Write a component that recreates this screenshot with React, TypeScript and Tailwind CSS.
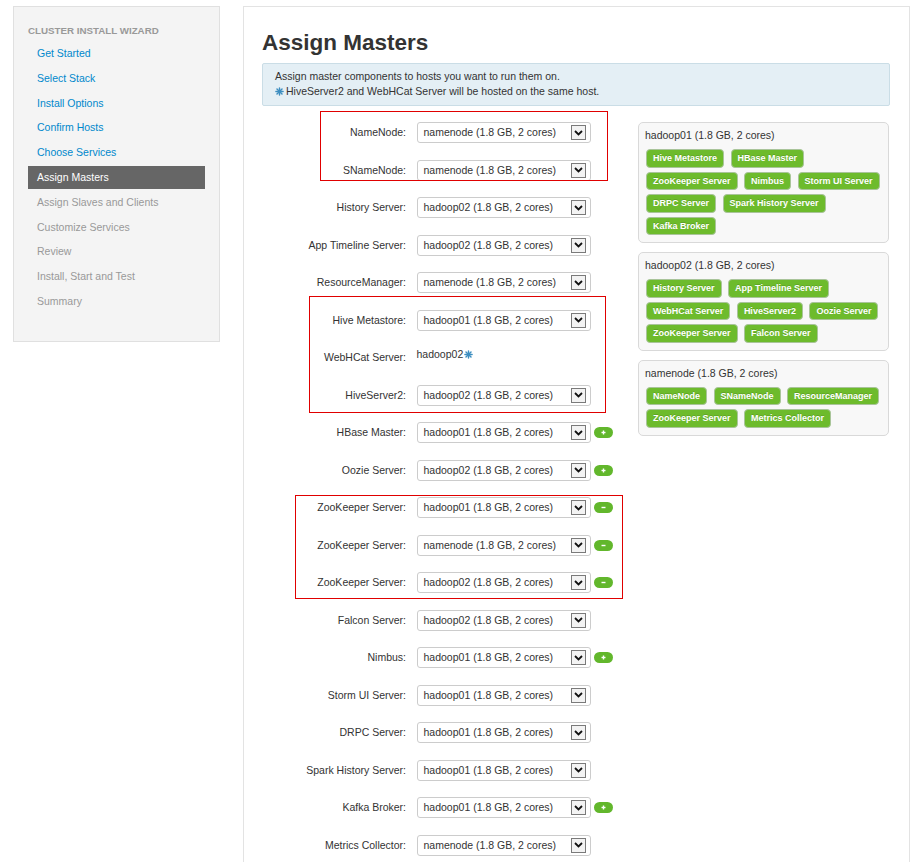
import React from "react";

const navItems: { label: string; state: "link" | "active" | "disabled" }[] = [
  { label: "Get Started", state: "link" },
  { label: "Select Stack", state: "link" },
  { label: "Install Options", state: "link" },
  { label: "Confirm Hosts", state: "link" },
  { label: "Choose Services", state: "link" },
  { label: "Assign Masters", state: "active" },
  { label: "Assign Slaves and Clients", state: "disabled" },
  { label: "Customize Services", state: "disabled" },
  { label: "Review", state: "disabled" },
  { label: "Install, Start and Test", state: "disabled" },
  { label: "Summary", state: "disabled" },
];

type Row = { label: string; host?: string; btn?: "+" | "-"; fixed?: string };
const H1 = "hadoop01 (1.8 GB, 2 cores)";
const H2 = "hadoop02 (1.8 GB, 2 cores)";
const NN = "namenode (1.8 GB, 2 cores)";

const rows: Row[] = [
  { label: "NameNode:", host: NN },
  { label: "SNameNode:", host: NN },
  { label: "History Server:", host: H2 },
  { label: "App Timeline Server:", host: H2 },
  { label: "ResourceManager:", host: NN },
  { label: "Hive Metastore:", host: H1 },
  { label: "WebHCat Server:", fixed: "hadoop02" },
  { label: "HiveServer2:", host: H2 },
  { label: "HBase Master:", host: H1, btn: "+" },
  { label: "Oozie Server:", host: H2, btn: "+" },
  { label: "ZooKeeper Server:", host: H1, btn: "-" },
  { label: "ZooKeeper Server:", host: NN, btn: "-" },
  { label: "ZooKeeper Server:", host: H2, btn: "-" },
  { label: "Falcon Server:", host: H2 },
  { label: "Nimbus:", host: H1, btn: "+" },
  { label: "Storm UI Server:", host: H1 },
  { label: "DRPC Server:", host: H1 },
  { label: "Spark History Server:", host: H1 },
  { label: "Kafka Broker:", host: H1, btn: "+" },
  { label: "Metrics Collector:", host: NN },
];

const hosts = [
  {
    title: "hadoop01 (1.8 GB, 2 cores)",
    comps: [
      "Hive Metastore",
      "HBase Master",
      "ZooKeeper Server",
      "Nimbus",
      "Storm UI Server",
      "DRPC Server",
      "Spark History Server",
      "Kafka Broker",
    ],
  },
  {
    title: "hadoop02 (1.8 GB, 2 cores)",
    comps: [
      "History Server",
      "App Timeline Server",
      "WebHCat Server",
      "HiveServer2",
      "Oozie Server",
      "ZooKeeper Server",
      "Falcon Server",
    ],
  },
  {
    title: "namenode (1.8 GB, 2 cores)",
    comps: ["NameNode", "SNameNode", "ResourceManager", "ZooKeeper Server", "Metrics Collector"],
  },
];

function Asterisk({ className = "" }: { className?: string }) {
  return (
    <svg width="9" height="9" viewBox="0 0 10 10" className={className}>
      <g stroke="#3d8ec0" strokeWidth="1.6" strokeLinecap="round">
        <line x1="5" y1="1" x2="5" y2="9" />
        <line x1="1" y1="5" x2="9" y2="5" />
        <line x1="2.2" y1="2.2" x2="7.8" y2="7.8" />
        <line x1="7.8" y1="2.2" x2="2.2" y2="7.8" />
      </g>
    </svg>
  );
}

function Select({ value }: { value: string }) {
  return (
    <div className="w-[174px] h-[21px] border border-[#cccccc] rounded-[3px] bg-white flex items-center justify-between pl-[6px] pr-[4px]">
      <span className="text-[10.5px] leading-none text-[#333]">{value}</span>
      <span className="w-[15px] h-[15px] border border-[#7a7a7a] bg-[#f3f3f3] flex items-center justify-center">
        <svg width="9" height="6" viewBox="0 0 9 6">
          <path d="M1 1 L4.5 4.5 L8 1" fill="none" stroke="#111" strokeWidth="1.8" />
        </svg>
      </span>
    </div>
  );
}

function Pill({ kind }: { kind: "+" | "-" }) {
  return (
    <span className="ml-[3px] w-[19px] h-[11px] rounded-full bg-[#62b72c] flex items-center justify-center">
      <svg width="7" height="7" viewBox="0 0 7 7">
        <line x1="1.5" y1="3.5" x2="5.5" y2="3.5" stroke="#fff" strokeWidth="1.4" />
        {kind === "+" && <line x1="3.5" y1="1.5" x2="3.5" y2="5.5" stroke="#fff" strokeWidth="1.4" />}
      </svg>
    </span>
  );
}

export default function App() {
  return (
    <div
      className="relative w-[911px] h-[862px] overflow-hidden bg-white text-[#333]"
      style={{ fontFamily: '"Liberation Sans", Arial, sans-serif' }}
    >
      <div className="flex items-start pt-[6px] pl-[13px]">
        {/* Sidebar */}
        <div className="w-[207px] h-[336px] border border-[#e0e0e0] bg-[#f4f4f4] px-[14px] pt-[15.5px]">
          <div className="text-[9.75px] leading-[15px] font-bold text-[#999]">CLUSTER INSTALL WIZARD</div>
          <div className="mt-[5px] flex flex-col gap-[2px]">
            {navItems.map((n) => (
              <div
                key={n.label}
                className={
                  "h-[22.8px] pl-[9px] flex items-center text-[10.5px] " +
                  (n.state === "active"
                    ? "bg-[#666666] text-white"
                    : n.state === "link"
                    ? "text-[#0088cc]"
                    : "text-[#999999]")
                }
              >
                {n.label}
              </div>
            ))}
          </div>
        </div>

        {/* Main panel */}
        <div className="ml-[23px] w-[667px] h-[900px] border-l border-t border-r border-[#e3e3e3] pl-[18px] pr-[19px] pt-[22.6px]">
          <h1 className="text-[22.5px] leading-[25px] font-bold text-[#333]">Assign Masters</h1>
          <div className="mt-[8.4px] h-[43px] border border-[#cadde6] bg-[#e4eff5] rounded-[2px] px-[12px] py-[5.5px] text-[10.5px] leading-[15px] text-[#333]">
            <div>Assign master components to hosts you want to run them on.</div>
            <div className="flex items-center">
              <Asterisk className="mr-[2px]" />
              <span>HiveServer2 and WebHCat Server will be hosted on the same host.</span>
            </div>
          </div>

          <div className="mt-[8px] flex">
            <div className="w-[376px] flex flex-col">
              {rows.map((r, i) => (
                <div key={i} className="h-[37.5px] flex items-center">
                  <div className="w-[144px] text-right text-[10.5px] leading-none">{r.label}</div>
                  <div className="ml-[10.5px] flex items-center">
                    {r.fixed ? (
                      <span className="mb-[7px] flex items-center text-[10.5px] leading-none">
                        {r.fixed}
                        <Asterisk className="ml-[1px]" />
                      </span>
                    ) : (
                      <Select value={r.host!} />
                    )}
                    {r.btn && <Pill kind={r.btn} />}
                  </div>
                </div>
              ))}
            </div>

            <div className="flex flex-col gap-[9px] mt-[8.3px]">
              {hosts.map((h) => (
                <div
                  key={h.title}
                  className="w-[251px] border border-[#d9d9d9] rounded-[5px] bg-[#f8f8f8] px-[7px] pt-[5px] pb-[7px]"
                >
                  <div className="text-[10.5px] leading-[15px] -ml-[1px]">{h.title}</div>
                  <div className="mt-[6px] flex flex-wrap gap-x-[6.5px] gap-y-[4px]">
                    {h.comps.map((c, j) => (
                      <span
                        key={j}
                        className="h-[18.5px] px-[6px] rounded-[4px] bg-[#6dbb2c] border border-[#a9c49a] text-white text-[9px] font-bold flex items-center leading-none"
                        style={{ textShadow: "0 -1px 0 rgba(0,0,0,0.15)" }}
                      >
                        {c}
                      </span>
                    ))}
                  </div>
                </div>
              ))}
            </div>
          </div>
        </div>
      </div>

      {/* red annotation boxes */}
      <div className="absolute left-[320px] top-[110.5px] w-[287.5px] h-[70px] border border-[#e00000] pointer-events-none" />
      <div className="absolute left-[309px] top-[295.5px] w-[297px] h-[117px] border border-[#e00000] pointer-events-none" />
      <div className="absolute left-[295px] top-[495px] w-[328px] h-[104px] border border-[#e00000] pointer-events-none" />
    </div>
  );
}
